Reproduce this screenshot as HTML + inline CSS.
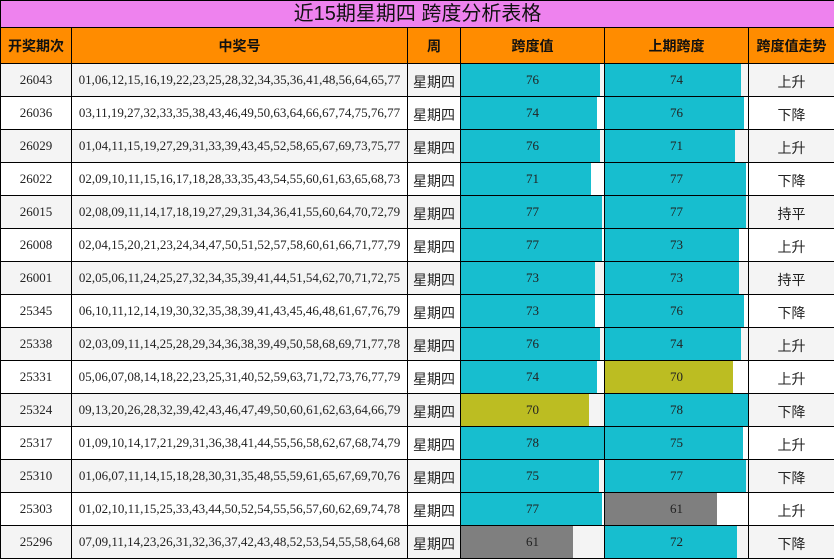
<!DOCTYPE html>
<html><head><meta charset="utf-8"><style>
body{margin:0;width:834px;height:560px;overflow:hidden;background:#fff;font-family:"Liberation Serif","Noto Serif CJK SC",serif}
table{border-collapse:collapse;table-layout:fixed;width:834px;position:absolute;left:0;top:0}
td,th{border:1px solid #000;padding:0;text-align:center;font-size:13px;color:#222;overflow:hidden;white-space:nowrap}
.t{height:26px;background:#ee82ee;font-family:"Liberation Sans","Noto Sans CJK SC",sans-serif;font-size:20px;font-weight:normal;color:#111;line-height:26px}
.h th{height:35px;background:#ff8c00;font-family:"Liberation Sans","Noto Sans CJK SC",sans-serif;font-size:14px;font-weight:bold;color:#111}
tr.r td{height:32px}
tr.r:nth-child(odd) td{background:#f4f4f4}
tr.r:nth-child(even) td{background:#fff}
.cn{font-family:"Liberation Sans","Noto Sans CJK SC",sans-serif;font-size:14px}
.cn span{position:relative;top:2px}
.b{position:relative}
.b i{position:absolute;left:0;top:0;bottom:0;display:block}
.b span{position:relative}
.c{background:#17becf}.o{background:#bcbd22}.g{background:#7f7f7f}
</style></head><body>
<table>
<colgroup><col style="width:71px"><col style="width:336px"><col style="width:53px"><col style="width:144px"><col style="width:144px"><col style="width:86px"></colgroup>
<tr><th colspan="6" class="t">近15期星期四 跨度分析表格</th></tr>
<tr class="h"><th>开奖期次</th><th>中奖号</th><th>周</th><th>跨度值</th><th>上期跨度</th><th>跨度值走势</th></tr>
<tbody id="tb"></tbody>
</table>
<script>
var d=[
["26043","01,06,12,15,16,19,22,23,25,28,32,34,35,36,41,48,56,64,65,77",76,74,"上升"],
["26036","03,11,19,27,32,33,35,38,43,46,49,50,63,64,66,67,74,75,76,77",74,76,"下降"],
["26029","01,04,11,15,19,27,29,31,33,39,43,45,52,58,65,67,69,73,75,77",76,71,"上升"],
["26022","02,09,10,11,15,16,17,18,28,33,35,43,54,55,60,61,63,65,68,73",71,77,"下降"],
["26015","02,08,09,11,14,17,18,19,27,29,31,34,36,41,55,60,64,70,72,79",77,77,"持平"],
["26008","02,04,15,20,21,23,24,34,47,50,51,52,57,58,60,61,66,71,77,79",77,73,"上升"],
["26001","02,05,06,11,24,25,27,32,34,35,39,41,44,51,54,62,70,71,72,75",73,73,"持平"],
["25345","06,10,11,12,14,19,30,32,35,38,39,41,43,45,46,48,61,67,76,79",73,76,"下降"],
["25338","02,03,09,11,14,25,28,29,34,36,38,39,49,50,58,68,69,71,77,78",76,74,"上升"],
["25331","05,06,07,08,14,18,22,23,25,31,40,52,59,63,71,72,73,76,77,79",74,70,"上升"],
["25324","09,13,20,26,28,32,39,42,43,46,47,49,50,60,61,62,63,64,66,79",70,78,"下降"],
["25317","01,09,10,14,17,21,29,31,36,38,41,44,55,56,58,62,67,68,74,79",78,75,"上升"],
["25310","01,06,07,11,14,15,18,28,30,31,35,48,55,59,61,65,67,69,70,76",75,77,"下降"],
["25303","01,02,10,11,15,25,33,43,44,50,52,54,55,56,57,60,62,69,74,78",77,61,"上升"],
["25296","07,09,11,14,23,26,31,32,36,37,42,43,48,52,53,54,55,58,64,68",61,72,"下降"]];
function col(v){return v==70?"o":v==61?"g":"c"}
function bar(v){return '<td class="b"><i class="'+col(v)+'" style="width:'+(v/78*100)+'%"></i><span>'+v+'</span></td>'}
var h="";d.forEach(function(r){h+='<tr class="r"><td>'+r[0]+'</td><td>'+r[1]+'</td><td class="cn"><span>星期四</span></td>'+bar(r[2])+bar(r[3])+'<td class="cn"><span>'+r[4]+'</span></td></tr>'});
document.getElementById("tb").innerHTML=h;
</script>
</body></html>
